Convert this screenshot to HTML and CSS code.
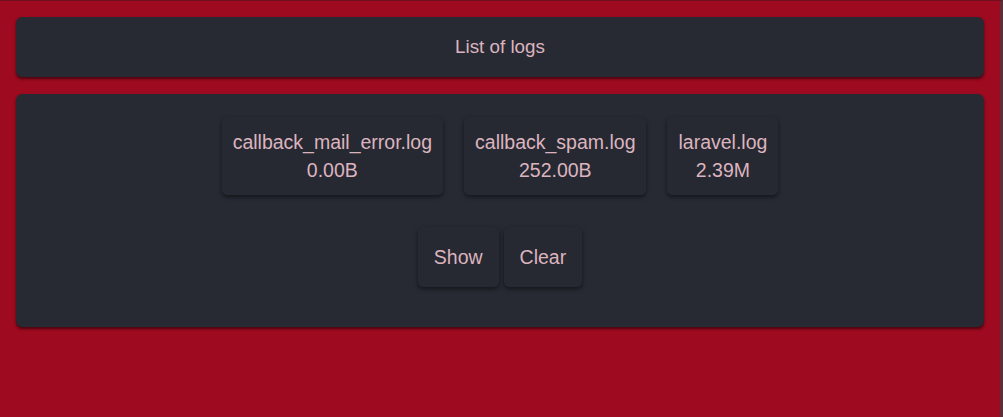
FILE: index.html
```html
<!DOCTYPE html>
<html>
<head>
<meta charset="utf-8">
<link rel="stylesheet" href="styles.css">
</head>
<body>
<div class="page">
  <header class="panel title">List of logs</header>
  <main class="panel content">
    <div class="files">
      <div class="file"><div>callback_mail_error.log</div><div>0.00B</div></div>
      <div class="file"><div>callback_spam.log</div><div>252.00B</div></div>
      <div class="file"><div>laravel.log</div><div>2.39M</div></div>
    </div>
    <div class="actions">
      <button class="btn">Show</button>
      <button class="btn">Clear</button>
    </div>
  </main>
</div>
</body>
</html>
```
FILE: styles.css
```css
html, body {
  margin: 0;
  padding: 0;
  height: 100%;
}
body {
  background: #9e0a1f;
  font-family: "Liberation Sans", Arial, sans-serif;
  color: #dcb4bf;
  border-top: 1px solid #6e1020;
  border-right: 3px solid #5a3038;
  box-sizing: border-box;
}
.page {
  padding: 16px 16px 0 16px;
  display: flex;
  flex-direction: column;
  gap: 17px;
}
.panel {
  background: #272a33;
  border-radius: 6px;
  box-shadow: 0 2px 3px rgba(0,0,0,0.55);
}
.title {
  height: 60px;
  display: flex;
  align-items: center;
  justify-content: center;
  font-size: 18.8px;
}
.content {
  height: 233px;
  box-sizing: border-box;
  padding-top: 23px;
  display: flex;
  flex-direction: column;
  align-items: center;
}
.files {
  display: flex;
  gap: 21px;
}
.file {
  background: #262932;
  border-radius: 5px;
  box-shadow: 0 2px 4px rgba(0,0,0,0.5);
  padding: 11px 11px;
  font-size: 19.5px;
  line-height: 28px;
  text-align: center;
}
.actions {
  margin-top: 32px;
  display: flex;
  gap: 5px;
}
.btn {
  background: #262932;
  border: none;
  border-radius: 5px;
  box-shadow: 0 2px 4px rgba(0,0,0,0.5);
  color: #dcb4bf;
  font-family: "Liberation Sans", Arial, sans-serif;
  font-size: 19.5px;
  height: 60px;
  padding: 0 16px;
}
```
